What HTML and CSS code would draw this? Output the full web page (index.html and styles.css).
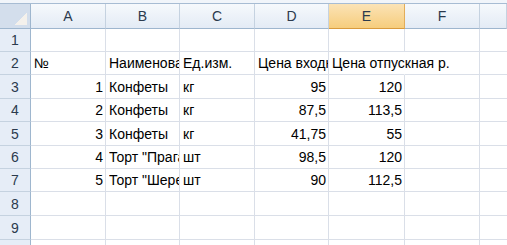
FILE: index.html
```html
<!DOCTYPE html>
<html lang="ru">
<head>
    <meta charset="UTF-8">
    <title>Лист1</title>
    <link rel="stylesheet" href="styles.css">
</head>
<body>
    <div class="topline"></div>
    <div class="sheet">
        <!-- заголовки столбцов -->
        <div class="corner"><span class="tri"></span></div>
        <div class="colhead">A</div>
        <div class="colhead">B</div>
        <div class="colhead">C</div>
        <div class="colhead">D</div>
        <div class="colhead active">E</div>
        <div class="colhead">F</div>
        <div class="colhead last"></div>

        <div class="rowhead">1</div>
        <div class="cell"></div><div class="cell"></div><div class="cell"></div><div class="cell"></div><div class="cell"></div><div class="cell"></div><div class="cell last"></div>

        <div class="rowhead">2</div>
        <div class="cell">№</div>
        <div class="cell"><span class="clip">Наименование</span></div>
        <div class="cell">Ед.изм.</div>
        <div class="cell"><span class="clip">Цена входная</span></div>
        <div class="cell spill">Цена отпускная р.</div>
        <div class="cell"></div>
        <div class="cell last"></div>

        <div class="rowhead">3</div>
        <div class="cell num">1</div>
        <div class="cell">Конфеты</div>
        <div class="cell">кг</div>
        <div class="cell num">95</div>
        <div class="cell num">120</div>
        <div class="cell"></div>
        <div class="cell last"></div>

        <div class="rowhead">4</div>
        <div class="cell num">2</div>
        <div class="cell">Конфеты</div>
        <div class="cell">кг</div>
        <div class="cell num">87,5</div>
        <div class="cell num">113,5</div>
        <div class="cell"></div>
        <div class="cell last"></div>

        <div class="rowhead">5</div>
        <div class="cell num">3</div>
        <div class="cell">Конфеты</div>
        <div class="cell">кг</div>
        <div class="cell num">41,75</div>
        <div class="cell num">55</div>
        <div class="cell"></div>
        <div class="cell last"></div>

        <div class="rowhead">6</div>
        <div class="cell num">4</div>
        <div class="cell"><span class="clip">Торт "Прага"</span></div>
        <div class="cell">шт</div>
        <div class="cell num">98,5</div>
        <div class="cell num">120</div>
        <div class="cell"></div>
        <div class="cell last"></div>

        <div class="rowhead">7</div>
        <div class="cell num">5</div>
        <div class="cell"><span class="clip">Торт "Шереметьевский"</span></div>
        <div class="cell">шт</div>
        <div class="cell num">90</div>
        <div class="cell num">112,5</div>
        <div class="cell"></div>
        <div class="cell last"></div>

        <div class="rowhead">8</div>
        <div class="cell"></div><div class="cell"></div><div class="cell"></div><div class="cell"></div><div class="cell"></div><div class="cell"></div><div class="cell last"></div>

        <div class="rowhead">9</div>
        <div class="cell"></div><div class="cell"></div><div class="cell"></div><div class="cell"></div><div class="cell"></div><div class="cell"></div><div class="cell last"></div>

        <div class="rowhead short"></div>
        <div class="cell short"></div><div class="cell short"></div><div class="cell short"></div><div class="cell short"></div><div class="cell short"></div><div class="cell short"></div><div class="cell short last"></div>
    </div>
</body>
</html>
```

FILE: styles.css
```css
* {
    margin: 0;
    padding: 0;
    box-sizing: border-box;
}

html, body {
    height: 100%;
    overflow: hidden;
}

body {
    font-family: "Liberation Sans", Arial, sans-serif;
    font-size: 14px;
    background: #fff;
    color: #000;
}

.topline {
    height: 4px;
    background: #f1f5fa;
    border-bottom: 1px solid #a7bcd3;
}

.sheet {
    display: grid;
    grid-template-columns: 31px 75px 74px 75px 74px 76px 75px 1fr;
    grid-template-rows: 25px 23px 23px 24px 23px 24px 23px 23px 24px 24px 5px;
}

.corner {
    position: relative;
    background: #d3deec;
    border-right: 1px solid #9eb6ce;
    border-bottom: 1px solid #9eb6ce;
}

.corner .tri {
    position: absolute;
    right: 3px;
    bottom: 3px;
    width: 13px;
    height: 13px;
    background: linear-gradient(135deg, transparent 50%, #f4f1ec 50%);
}

.colhead {
    display: flex;
    align-items: center;
    justify-content: center;
    background: linear-gradient(#f6f9fc, #e3ebf5);
    border-right: 1px solid #c5d2e0;
    border-bottom: 1px solid #9eb6ce;
    color: #2b3a4d;
    font-size: 14px;
}

.colhead.active {
    background: linear-gradient(#fbe3b6, #f6cd7d);
    border-right: 1px solid #e2ad5a;
    border-bottom: 1px solid #d99b3e;
}

.rowhead {
    display: flex;
    align-items: center;
    justify-content: center;
    background: #e6edf7;
    border-right: 1px solid #9eb6ce;
    border-bottom: 1px solid #c5d2e0;
    color: #2b3a4d;
    font-size: 14px;
}

.cell {
    display: flex;
    align-items: flex-end;
    padding: 0 2px 3px 3px;
    border-right: 1px solid #dadfe8;
    border-bottom: 1px solid #dadfe8;
    white-space: nowrap;
    overflow: hidden;
}

.cell .clip {
    display: block;
    overflow: hidden;
    margin-right: -2px;
}

.cell.num {
    justify-content: flex-end;
}

.cell.spill {
    overflow: visible;
    border-right-color: transparent;
}

.cell.last {
    border-right: none;
}

.short {
    border-bottom: none;
}
```
